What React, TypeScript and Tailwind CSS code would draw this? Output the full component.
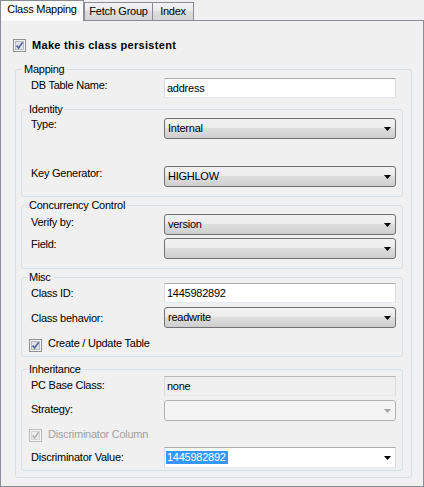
import React from 'react';

const tabs = [
    { name: 'Fetch Group', width: 'w-[69px]' },
    { name: 'Index', width: 'w-[41px] border-l-0' },
];

function Check({ disabled = false }: { disabled?: boolean }) {
    return (
        <svg width="13" height="13" viewBox="0 0 13 13" className="shrink-0">
            <rect x="0.5" y="0.5" width="12" height="12" fill="#f4f4f4" stroke={disabled ? '#bcbcbc' : '#8e8f8f'} />
            <rect x="2.5" y="2.5" width="8" height="8" fill={disabled ? '#ececec' : '#dfe3e9'} stroke={disabled ? '#d4d4d4' : '#b4b9c0'} />
            <path d="M3.6 6.4 L5.6 9 L9.6 3.4" fill="none" stroke={disabled ? '#b0b0b0' : '#4a5f97'} strokeWidth="1.6" />
        </svg>
    );
}

function Arrow({ color = '#000' }: { color?: string }) {
    return (
        <svg width="7" height="4" viewBox="0 0 7 4" className="shrink-0">
            <path d="M0 0h7L3.5 4z" fill={color} />
        </svg>
    );
}

function TextBox({ value, readOnly = false }: { value: string; readOnly?: boolean }) {
    return (
        <div
            className={`w-[232px] h-[20px] flex items-center pl-[2px] border border-[#d8dbe0] border-t-[#abadb3] border-b-[#e3e9ef] ${
                readOnly ? 'bg-[#f0f0f0] border-t-[#b8b8b8]' : 'bg-white'
            }`}
        >
            <span className="leading-[13px]">{value}</span>
        </div>
    );
}

function Combo({ value, disabled = false }: { value: string; disabled?: boolean }) {
    return (
        <div
            className={`w-[232px] h-[21px] flex items-center pl-[3px] pr-[4px] rounded-[3px] border ${
                disabled
                    ? 'border-[#adb2b5] bg-[#f4f4f4]'
                    : 'border-[#707070] bg-[linear-gradient(#f2f2f2,#ebebeb_50%,#dddddd_50%,#cfcfcf)]'
            }`}
        >
            <span className="flex-1 leading-[13px]">{value}</span>
            <Arrow color={disabled ? '#a3a3a3' : '#000'} />
        </div>
    );
}

function EditCombo({ value }: { value: string }) {
    return (
        <div className="w-[232px] h-[21px] flex items-start pt-px pl-px pr-[4px] bg-white border border-[#d8dbe0] border-t-[#abadb3] border-b-[#e3e9ef]">
            <div className="flex-1">
                <span className="leading-[13px] inline-block bg-[#3399ff] text-white pl-px pr-[2px]">{value}</span>
            </div>
            <div className="self-center">
                <Arrow />
            </div>
        </div>
    );
}

function Row({
    label,
    lc = '',
    className = '',
    children,
}: {
    label: string;
    lc?: string;
    className?: string;
    children: React.ReactNode;
}) {
    return (
        <div className={`flex items-start ${className}`}>
            <div className={`flex-1 leading-[13px] ${lc}`}>{label}</div>
            {children}
        </div>
    );
}

function Group({ title, className = '', children }: { title: string; className?: string; children: React.ReactNode }) {
    return (
        <fieldset className={`border border-[#d5dfe5] rounded-[3px] ${className}`}>
            <legend className="ml-[5px] px-[2px] leading-[13px]">{title}</legend>
            {children}
        </fieldset>
    );
}

export default function App() {
    return (
        <div className="w-[424px] h-[487px] bg-[#f0f0f0] text-black text-[11px] tracking-[-0.25px] font-['Liberation_Sans',Arial,sans-serif]">
            {/* Tabs */}
            <div className="flex items-start h-[20px] relative z-10">
                <div className="w-[84px] h-[21px] flex justify-center pt-[2px] bg-[#fcfcfc] border border-b-0 border-[#898c95]">
                    <span className="leading-[13px]">Class Mapping</span>
                </div>
                {tabs.map((tab) => (
                    <div
                        key={tab.name}
                        className={`${tab.width} h-[18px] mt-[2px] flex justify-center pt-[2px] border border-b-0 border-[#898c95] bg-[linear-gradient(#f3f3f3,#e8e8e8_50%,#dcdcdc_50%,#d6d6d6)]`}
                    >
                        <span className="leading-[13px]">{tab.name}</span>
                    </div>
                ))}
            </div>

            {/* Tab page */}
            <div className="h-[467px] border border-[#898c95] bg-[#f0f0f0]">
                <div className="flex items-start mt-[18px] ml-[12px] h-[13px]">
                    <Check />
                    <span className="ml-[6px] font-bold tracking-[0.3px] leading-[13px]">Make this class persistent</span>
                </div>

                <fieldset className="mt-[11px] ml-[14px] w-[397px] pb-[6px] border border-[#d5dfe5] rounded-[3px]">
                    <legend className="ml-[6px] px-[2px] leading-[13px]">Mapping</legend>
                    <div className="pl-[5px] pr-[8px]">
                        <Row className="mt-[2px] pl-[10px] pr-[7px]" lc="mt-px" label="DB Table Name:">
                            <TextBox value="address" />
                        </Row>

                        <Group title="Identity" className="mt-[5px]">
                            <div className="pl-[9px] pr-[6px] pb-[9px]">
                                <Row className="mt-[2px]" label="Type:">
                                    <Combo value="Internal" />
                                </Row>
                                <Row className="mt-[27px]" lc="mt-px" label="Key Generator:">
                                    <Combo value="HIGHLOW" />
                                </Row>
                            </div>
                        </Group>

                        <Group title="Concurrency Control" className="mt-[2px]">
                            <div className="pl-[9px] pr-[6px] pb-[9px]">
                                <Row className="mt-[2px]" lc="mt-[2px]" label="Verify by:">
                                    <Combo value="version" />
                                </Row>
                                <Row className="mt-[3px]" label="Field:">
                                    <Combo value="" />
                                </Row>
                            </div>
                        </Group>

                        <Group title="Misc" className="mt-[2px]">
                            <div className="pl-[9px] pr-[6px] pb-[4px]">
                                <Row className="-mt-px" lc="mt-[4px]" label="Class ID:">
                                    <TextBox value="1445982892" />
                                </Row>
                                <Row className="mt-[4px]" lc="mt-[5px]" label="Class behavior:">
                                    <Combo value="readwrite" />
                                </Row>
                                <div className="flex items-start mt-[11px] -ml-[2px] h-[13px]">
                                    <Check />
                                    <span className="ml-[6px] -mt-[2px] leading-[13px]">Create / Update Table</span>
                                </div>
                            </div>
                        </Group>

                        <Group title="Inheritance" className="mt-[6px]">
                            <div className="pl-[9px] pr-[6px] pb-[2px]">
                                <Row lc="mt-[3px]" label="PC Base Class:">
                                    <TextBox value="none" readOnly />
                                </Row>
                                <Row className="mt-[4px]" lc="mt-[3px]" label="Strategy:">
                                    <Combo value="" disabled />
                                </Row>
                                <div className="flex items-start mt-[8px] -ml-[2px] h-[13px]">
                                    <Check disabled />
                                    <span className="ml-[6px] -mt-px leading-[13px] text-[#a0a0a0]">Discriminator Column</span>
                                </div>
                                <Row className="mt-[5px]" lc="mt-[4px]" label="Discriminator Value:">
                                    <EditCombo value="1445982892" />
                                </Row>
                            </div>
                        </Group>
                    </div>
                </fieldset>
            </div>
        </div>
    );
}
